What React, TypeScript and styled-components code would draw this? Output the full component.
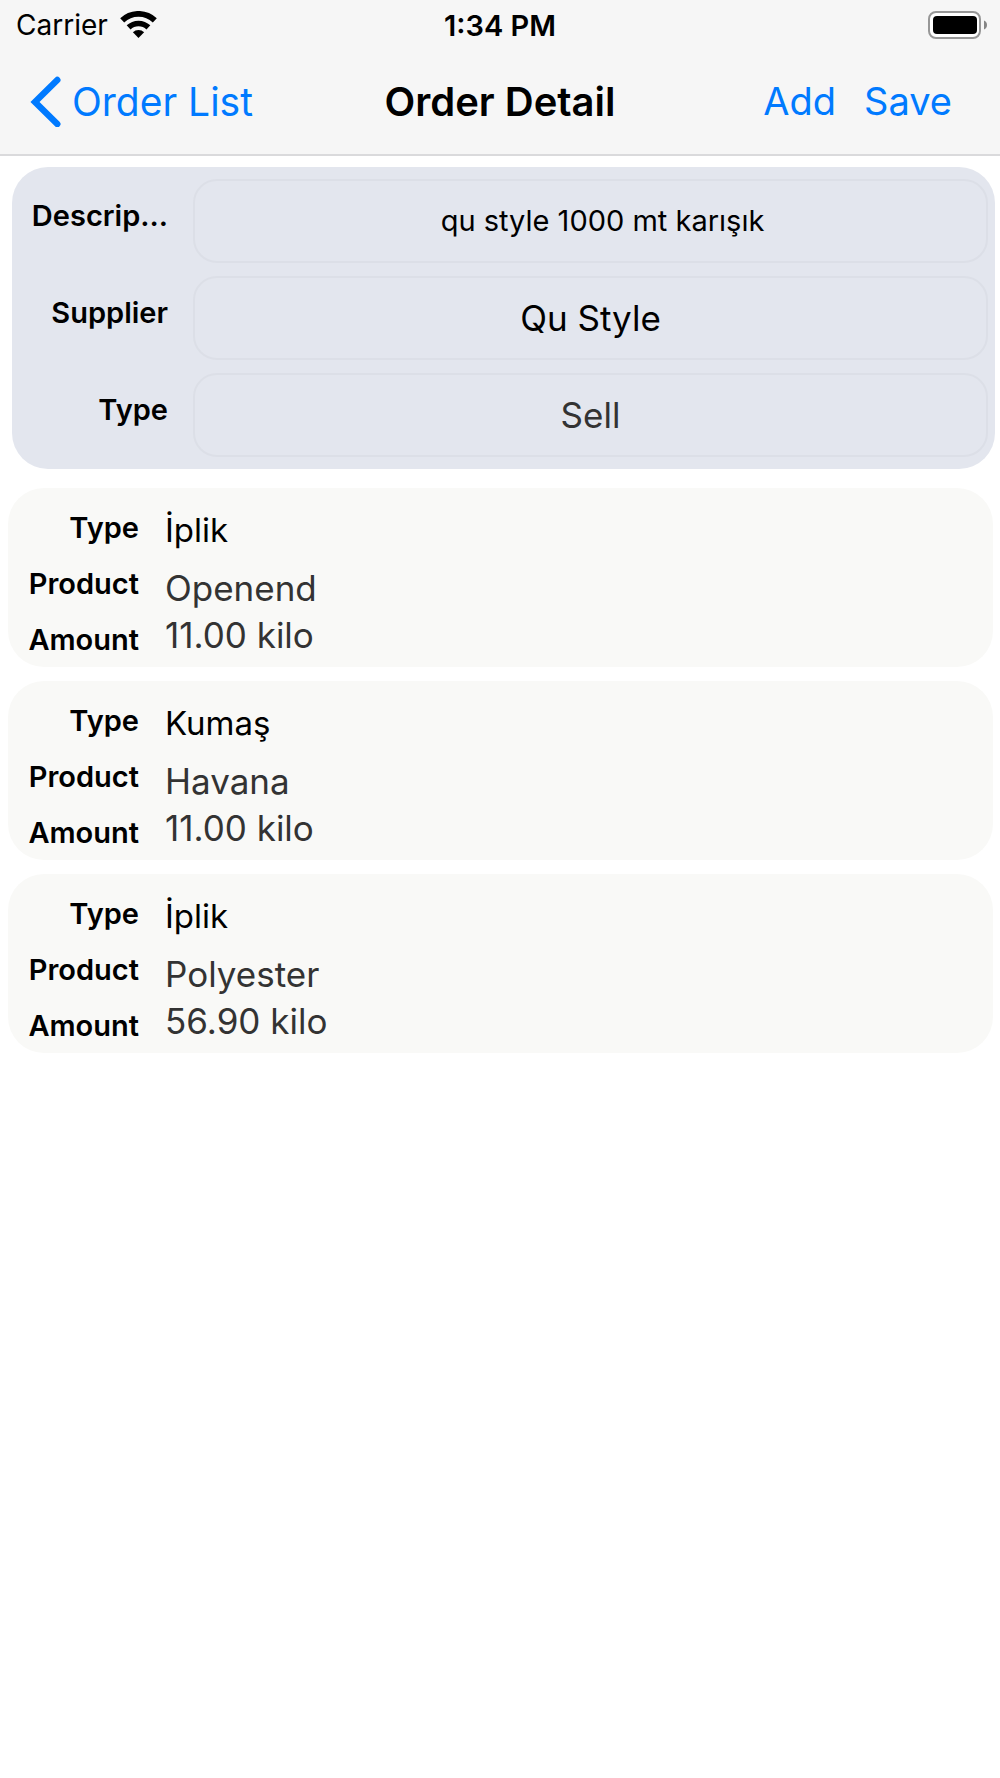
import React from "react";
import styled, { createGlobalStyle } from "styled-components";

const GlobalStyle = createGlobalStyle`
  *, *::before, *::after { box-sizing: border-box; }
  body {
    margin: 0;
    background: #ffffff;
    color: #000000;
    font-family: Inter, "Liberation Sans", sans-serif;
  }
  button, input, select { font: inherit; color: inherit; }
`;

const Header = styled.header`
  background: #f6f6f6;
  border-bottom: 2px solid #dadadc;
`;

const StatusBar = styled.div`
  display: grid;
  grid-template-columns: 1fr auto 1fr;
  align-items: center;
  height: 50px;
  padding: 0 13px;
  font-size: 28px;
`;

const Carrier = styled.div`
  display: flex;
  align-items: center;
  gap: 12px;
  padding-left: 3px;
`;

const Clock = styled.time`
  font-size: 29px;
  font-weight: 600;
`;

const BatterySlot = styled.div`
  display: flex;
  justify-content: flex-end;
`;

const NavBar = styled.nav`
  display: grid;
  grid-template-columns: 1fr auto 1fr;
  align-items: center;
  height: 104px;
  padding: 0 30px 2px;
  font-size: 39px;
`;

const BackLink = styled.a`
  display: flex;
  align-items: center;
  gap: 11px;
  color: #007aff;
  text-decoration: none;
`;

const Title = styled.h1`
  margin: 0;
  font-size: 40px;
  font-weight: 600;
`;

const Actions = styled.div`
  display: flex;
  justify-content: flex-end;
  gap: 28px;
  padding-right: 18px;
`;

const ActionButton = styled.button`
  padding: 0;
  border: 0;
  background: none;
  font-size: 38px;
  color: #007aff;
  cursor: pointer;
`;

const OrderForm = styled.form`
  display: grid;
  gap: 13px;
  margin: 11px 5px 0 12px;
  padding: 12px 7px 12px 12px;
  border-radius: 36px;
  background: #e3e6ee;
`;

const FormRow = styled.div`
  display: grid;
  grid-template-columns: 144px 1fr;
  align-items: center;
  gap: 25px;
`;

const FormLabel = styled.label`
  padding-bottom: 12px;
  font-size: 29px;
  font-weight: 600;
  text-align: right;
  white-space: nowrap;
`;

const fieldBox = `
  width: 100%;
  height: 84px;
  border: 2px solid #dcdfe7;
  border-radius: 24px;
  background: transparent;
  text-align: center;
  text-align-last: center;
  outline: none;
`;

const TextField = styled.input`
  ${fieldBox}
  padding: 0 0 2px 24px;
  font-size: 29px;
`;

const Picker = styled.select<{ $muted?: boolean }>`
  ${fieldBox}
  appearance: none;
  padding: 0;
  font-size: 35px;
  color: ${(p) => (p.$muted ? "#333333" : "#000000")};
`;

const ItemList = styled.ul`
  display: grid;
  gap: 14px;
  margin: 19px 7px 0 8px;
  padding: 0;
  list-style: none;
`;

const ItemCard = styled.li`
  padding-top: 11px;
  border-radius: 36px;
  background: #f9f9f7;
`;

const Details = styled.dl`
  display: grid;
  grid-template-columns: 131px 1fr;
  grid-auto-rows: 56px;
  align-items: center;
  column-gap: 26px;
  margin: 0;
`;

const DetailLabel = styled.dt`
  font-size: 29px;
  font-weight: 600;
  text-align: right;
`;

const DetailValue = styled.dd`
  margin: 0;
  font-size: 35px;
  line-height: 40px;
  color: #333333;
`;

const TypeValue = styled(DetailValue)`
  padding-top: 6px;
  font-size: 33px;
  color: #000000;
`;

const ProductValue = styled(DetailValue)`
  padding-top: 10px;
`;

const AmountValue = styled(DetailValue)`
  padding-bottom: 8px;
`;

const WifiIcon = () => (
  <svg width="37" height="28" viewBox="0 0 37 28" aria-hidden="true">
    <path d="M2.2 9.4a23.6 23.6 0 0 1 32.6 0" fill="none" stroke="#000" strokeWidth="5.8" />
    <path d="M8.6 16.4a14.4 14.4 0 0 1 19.8 0" fill="none" stroke="#000" strokeWidth="5.6" />
    <path d="M18.5 27l-5.6-5.7a8 8 0 0 1 11.2 0z" fill="#000" />
  </svg>
);

const BatteryIcon = () => (
  <svg width="59" height="28" viewBox="0 0 59 28" aria-hidden="true">
    <rect x="1" y="1" width="51" height="26" rx="7" fill="#fff" stroke="#979797" strokeWidth="2" />
    <rect x="5" y="5" width="44" height="18" rx="4" fill="#000" />
    <path d="M56 9.5c4 1.5 4 7.5 0 9z" fill="#858585" />
  </svg>
);

const BackIcon = () => (
  <svg width="31" height="52" viewBox="0 0 31 52" aria-hidden="true">
    <path
      d="M27.3 5L5 27l22.3 22"
      fill="none"
      stroke="#007aff"
      strokeWidth="6.4"
      strokeLinecap="round"
    />
  </svg>
);

const items = [
  { type: "İplik", product: "Openend", amount: "11.00 kilo" },
  { type: "Kumaş", product: "Havana", amount: "11.00 kilo" },
  { type: "İplik", product: "Polyester", amount: "56.90 kilo" },
];

export default function App() {
  return (
    <>
      <GlobalStyle />
      <Header>
        <StatusBar>
          <Carrier>
            Carrier
            <WifiIcon />
          </Carrier>
          <Clock>1:34 PM</Clock>
          <BatterySlot>
            <BatteryIcon />
          </BatterySlot>
        </StatusBar>
        <NavBar>
          <BackLink href="#orders">
            <BackIcon />
            Order List
          </BackLink>
          <Title>Order Detail</Title>
          <Actions>
            <ActionButton type="button">Add</ActionButton>
            <ActionButton type="submit" form="order">Save</ActionButton>
          </Actions>
        </NavBar>
      </Header>
      <main>
        <OrderForm id="order" onSubmit={(e) => e.preventDefault()}>
          <FormRow>
            <FormLabel htmlFor="description">Descrip...</FormLabel>
            <TextField id="description" type="text" defaultValue="qu style 1000 mt karışık" />
          </FormRow>
          <FormRow>
            <FormLabel htmlFor="supplier">Supplier</FormLabel>
            <Picker id="supplier">
              <option>Qu Style</option>
            </Picker>
          </FormRow>
          <FormRow>
            <FormLabel htmlFor="type">Type</FormLabel>
            <Picker id="type" $muted>
              <option>Sell</option>
            </Picker>
          </FormRow>
        </OrderForm>
        <ItemList>
          {items.map((item, index) => (
            <ItemCard key={index}>
              <Details>
                <DetailLabel>Type</DetailLabel>
                <TypeValue>{item.type}</TypeValue>
                <DetailLabel>Product</DetailLabel>
                <ProductValue>{item.product}</ProductValue>
                <DetailLabel>Amount</DetailLabel>
                <AmountValue>{item.amount}</AmountValue>
              </Details>
            </ItemCard>
          ))}
        </ItemList>
      </main>
    </>
  );
}
